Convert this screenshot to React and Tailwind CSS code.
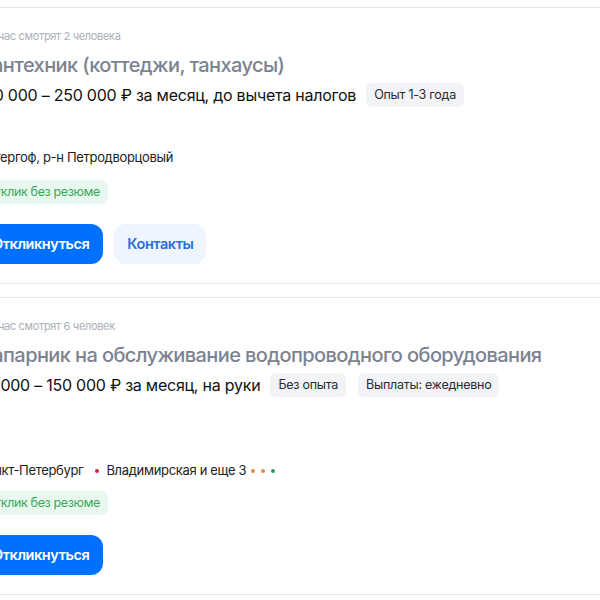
const vacancies = [
  {
    watching: "Сейчас смотрят 2 человека",
    title: "Сантехник (коттеджи, танхаусы)",
    salary: "150 000 – 250 000 ₽ за месяц, до вычета налогов",
    tags: ["Опыт 1-3 года"],
    gap: "mt-[41px]",
    location: "Петергоф, р-н Петродворцовый",
    metro: null,
    badgeGap: "mt-3",
    contacts: true,
  },
  {
    watching: "Сейчас смотрят 6 человек",
    title: "Напарник на обслуживание водопроводного оборудования",
    salary: "75 000 – 150 000 ₽ за месяц, на руки",
    tags: ["Без опыта", "Выплаты: ежедневно"],
    gap: "mt-[64px]",
    location: "Санкт-Петербург",
    metro: "Владимирская и еще 3",
    badgeGap: "mt-[10px]",
    contacts: false,
  },
];

function Dot({ color }) {
  return <span className={`inline-block w-[4px] h-[4px] rounded-full ${color}`} />;
}

function VacancyCard({ v }) {
  return (
    <div className="border-y border-[#e6e6e6] pl-[24px] pr-6 pt-[20px] pb-[19px]">
      <div className="text-[11px] leading-4 tracking-[-0.03em] text-[#a9afb7]">{v.watching}</div>
      <h2 className="mt-[7px] text-[20px] leading-7 font-medium tracking-[-0.03em] text-[#7b8391] whitespace-nowrap">
        {v.title}
      </h2>
      <div className="mt-1 flex items-center gap-3 h-6 whitespace-nowrap">
        <span className="text-[16px] tracking-[-0.015em] text-[#111] mr-[-2px]">{v.salary}</span>
        {v.tags.map((t) => (
          <span
            key={t}
            className="h-6 px-2 rounded-md bg-[#f1f3f7] text-[12.5px] leading-6 tracking-[-0.02em] text-[#2b2b2b]"
          >
            {t}
          </span>
        ))}
      </div>
      <div className={`${v.gap} flex items-center h-5 text-[13px] tracking-[-0.025em] text-[#222] whitespace-nowrap`}>
        <span>{v.location}</span>
        {v.metro && (
          <>
            <span className="ml-[12px] mr-[7px] flex">
              <Dot color="bg-[#d8264f]" />
            </span>
            <span>{v.metro}</span>
            <span className="ml-[5px] flex items-center gap-[6px]">
              <Dot color="bg-[#ea8a3e]" />
              <Dot color="bg-[#ea8a3e]" />
              <Dot color="bg-[#1e9c5e]" />
            </span>
          </>
        )}
      </div>
      <div className={`${v.badgeGap} flex`}>
        <span className="h-6 px-2 rounded-md bg-[#e9f8ee] text-[12.5px] leading-6 tracking-[-0.03em] text-[#3aa95a]">
          Отклик без резюме
        </span>
      </div>
      <div className="mt-5 flex gap-[11px]">
        <button className="h-10 px-[14px] rounded-xl bg-[#0070ff] text-white text-[14.5px] font-semibold tracking-[-0.03em]">
          Откликнуться
        </button>
        {v.contacts && (
          <button className="h-10 px-[13px] rounded-xl bg-[#eef5ff] text-[#2a6fd8] text-[14.5px] font-semibold tracking-[-0.03em]">
            Контакты
          </button>
        )}
      </div>
    </div>
  );
}

export default function App() {
  return (
    <div
      className="w-[600px] h-[600px] overflow-hidden bg-white"
      style={{ fontFamily: "Inter, 'Noto Sans', sans-serif" }}
    >
      <div className="ml-[-46px] w-[720px] pt-[7px] flex flex-col gap-[13px]">
        {vacancies.map((v) => (
          <VacancyCard key={v.title} v={v} />
        ))}
      </div>
    </div>
  );
}
